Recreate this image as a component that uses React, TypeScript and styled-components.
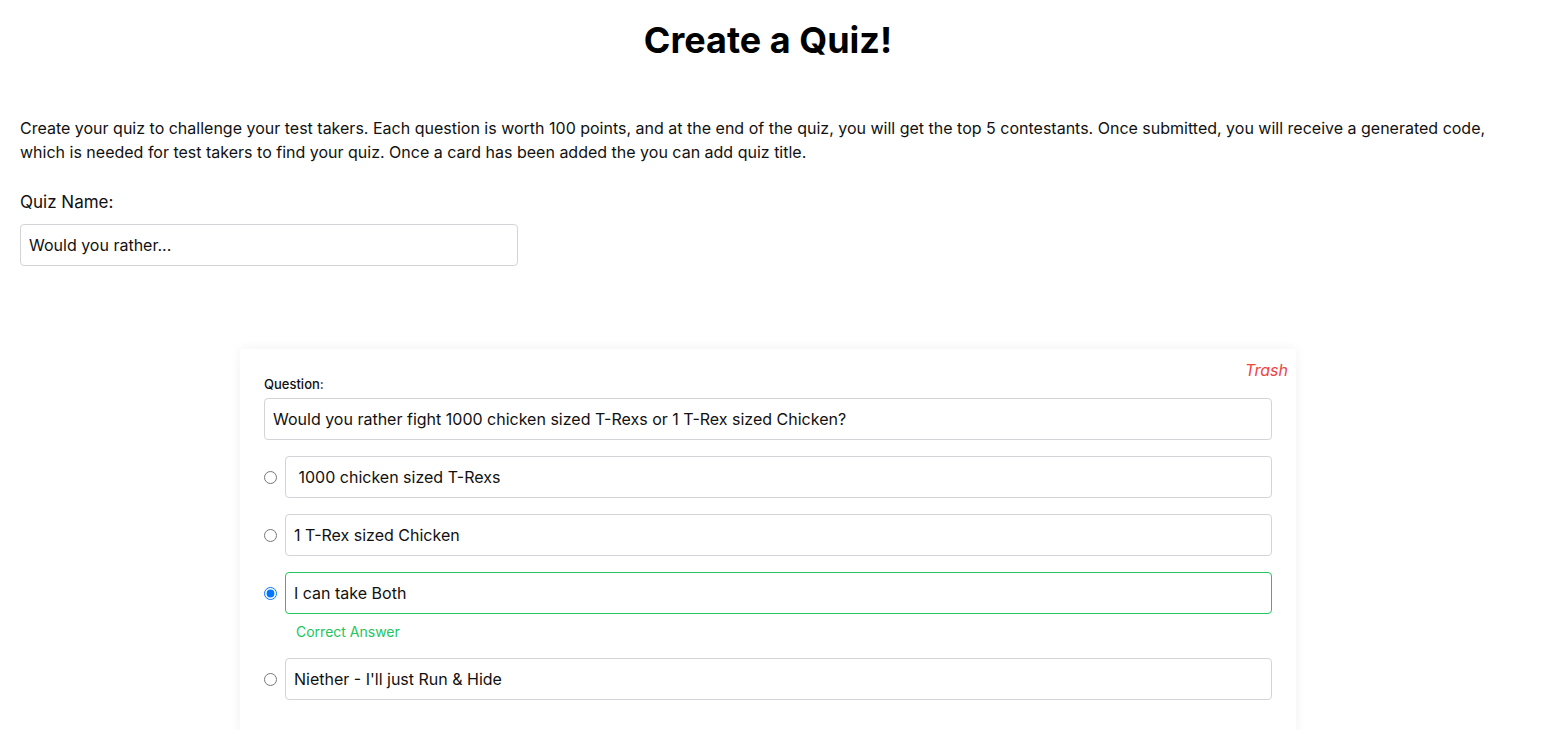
import React from "react";
import styled, { createGlobalStyle } from "styled-components";

const GlobalStyle = createGlobalStyle`
  html, body { margin: 0; padding: 0; background: #ffffff; }
  body { font-family: Inter, "Noto Sans", sans-serif; color: #111111; }
  * { box-sizing: border-box; }
`;

const Page = styled.main`
  display: flex;
  flex-direction: column;
  padding: 0 41px 40px 20px;
`;

const Title = styled.h1`
  margin: 18px 0 0;
  text-align: center;
  font-size: 36px;
  line-height: 44px;
  font-weight: 700;
  color: #000;
`;

const Intro = styled.p`
  margin: 54px 0 0;
  font-size: 16px;
  line-height: 24px;
  color: #111;
`;

const NameLabel = styled.label`
  margin-top: 26px;
  font-size: 17px;
  line-height: 24px;
  font-weight: 400;
  color: #111;
`;

const TextInput = styled.input<{ $width?: string; $correct?: boolean }>`
  width: ${(p) => p.$width ?? "100%"};
  height: 42px;
  padding: 0 8px;
  border: 1px solid ${(p) => (p.$correct ? "#22c55e" : "#d4d4d8")};
  border-radius: 4px;
  font-family: Inter, "Noto Sans", sans-serif;
  font-size: 16px;
  color: #111;
  background: #fff;
  outline: none;
`;

const NameInput = styled(TextInput)`
  margin-top: 10px;
`;

const Card = styled.section`
  position: relative;
  width: 1056px;
  margin: 83px auto 0;
  padding: 27px 24px 40px;
  background: #fff;
  border-radius: 4px;
  box-shadow: 0 0 12px rgba(0, 0, 0, 0.06);
  display: flex;
  flex-direction: column;
`;

const TrashButton = styled.button`
  position: absolute;
  top: 11px;
  right: 8px;
  border: none;
  background: none;
  padding: 0;
  font-family: Inter, "Noto Sans", sans-serif;
  font-style: italic;
  font-size: 16px;
  line-height: 20px;
  color: #ef4444;
  cursor: pointer;
`;

const QuestionLabel = styled.label`
  font-size: 13px;
  line-height: 16px;
  font-weight: 500;
  color: #111;
  margin-bottom: 6px;
`;

const Options = styled.div`
  margin-top: 16px;
  display: flex;
  flex-direction: column;
  gap: 16px;
`;

const OptionBlock = styled.div`
  display: flex;
  flex-direction: column;
`;

const OptionRow = styled.div`
  display: flex;
  align-items: center;
  gap: 8px;
`;

const Radio = styled.input`
  margin: 0;
  width: 13px;
  height: 13px;
  flex: none;
`;

const CorrectNote = styled.span`
  margin: 8px 0 0 32px;
  font-size: 14px;
  line-height: 20px;
  color: #22c55e;
`;

const answers = [
  " 1000 chicken sized T-Rexs",
  "1 T-Rex sized Chicken",
  "I can take Both",
  "Niether - I'll just Run & Hide",
];
const correctIndex = 2;

export default function App() {
  return (
    <>
      <GlobalStyle />
      <Page>
        <Title>Create a Quiz!</Title>
        <Intro>
          Create your quiz to challenge your test takers. Each question is worth 100 points, and at the end of the quiz, you will get the top 5 contestants. Once submitted, you will receive a generated code, which is needed for test takers to find your quiz. Once a card has been added the you can add quiz title.
        </Intro>
        <NameLabel>Quiz Name:</NameLabel>
        <NameInput $width="498px" defaultValue="Would you rather..." />
        <Card>
          <TrashButton>Trash</TrashButton>
          <QuestionLabel>Question:</QuestionLabel>
          <TextInput defaultValue="Would you rather fight 1000 chicken sized T-Rexs or 1 T-Rex sized Chicken?" />
          <Options>
            {answers.map((a, i) => (
              <OptionBlock key={i}>
                <OptionRow>
                  <Radio type="radio" name="answer" defaultChecked={i === correctIndex} />
                  <TextInput $correct={i === correctIndex} defaultValue={a} />
                </OptionRow>
                {i === correctIndex && <CorrectNote>Correct Answer</CorrectNote>}
              </OptionBlock>
            ))}
          </Options>
        </Card>
      </Page>
    </>
  );
}
